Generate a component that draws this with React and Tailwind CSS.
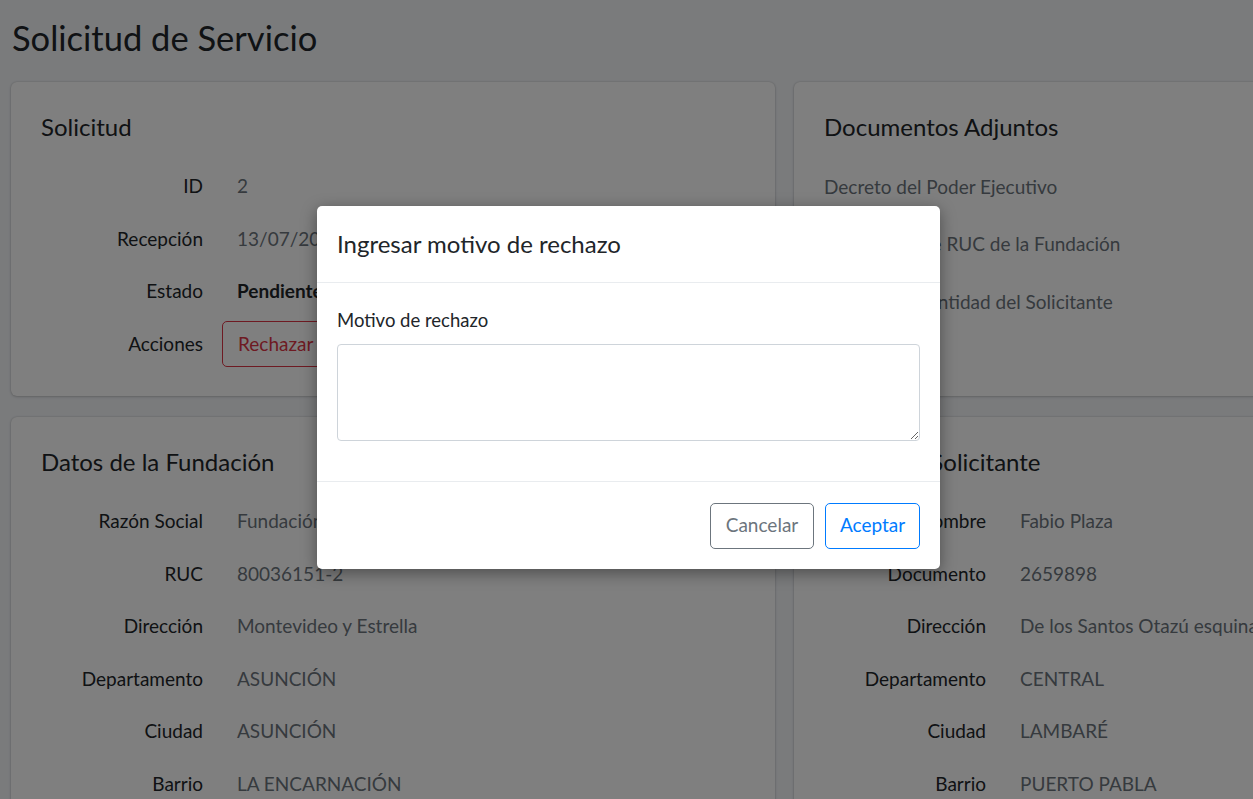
import React from "react";

const font = { fontFamily: "Lato, 'Open Sans', sans-serif" };

function Row({ label, children }) {
  return (
    <div className="flex h-[52.5px] items-center">
      <div className="w-[162px] shrink-0 text-right text-[19px] text-[#212529] whitespace-nowrap">{label}</div>
      <div className="ml-[19px] flex items-center text-[19px] text-[#6c757d]">{children}</div>
    </div>
  );
}

function Val({ children }) {
  return <span className="pl-[15px] whitespace-nowrap">{children}</span>;
}

function Card({ title, children, className = "" }) {
  return (
    <div className={"rounded-[6px] bg-white shadow-[0_0_2px_rgba(0,0,0,0.2),0_1px_3px_rgba(0,0,0,0.15)] px-[30px] pt-[30px] " + className}>
      <h3 className="text-[24px] leading-[30px] text-[#212529] whitespace-nowrap">{title}</h3>
      {children}
    </div>
  );
}

export default function App() {
  return (
    <div style={font} className="relative h-[799px] w-full overflow-hidden bg-[#f4f6f9]">
      <div className="px-[11px]">
        <h1 className="pt-[16px] pl-[1px] text-[34.5px] leading-[44px] text-[#212529]">Solicitud de Servicio</h1>
        <div className="mt-[22px] grid grid-cols-[764px_764px] gap-x-[19px] gap-y-[21px]">
          <Card title="Solicitud" className="pb-[26px]">
            <div className="mt-[18px]">
              <Row label="ID"><Val>2</Val></Row>
              <Row label="Recepción"><Val>13/07/2020</Val></Row>
              <Row label="Estado"><Val><b className="font-bold text-[#212529]">Pendiente</b></Val></Row>
              <Row label="Acciones">
                <button className="h-[46px] rounded-[5px] border border-[#dc3545] px-[15px] text-[19px] text-[#dc3545]">Rechazar</button>
                <button className="ml-[10px] h-[46px] rounded-[5px] border border-[#28a745] px-[15px] text-[19px] text-[#28a745]">Aprobar</button>
              </Row>
            </div>
          </Card>
          <Card title="Documentos Adjuntos">
            <div className="mt-[16px] flex flex-col text-[19px] text-[#6c757d]">
              <div className="flex h-[57.5px] items-center">Decreto del Poder Ejecutivo</div>
              <div className="flex h-[57.5px] items-center">Constancia de RUC de la Fundación</div>
              <div className="flex h-[57.5px] items-center">Cédula de Identidad del Solicitante</div>
            </div>
          </Card>
          <Card title="Datos de la Fundación">
            <div className="mt-[18px]">
              <Row label="Razón Social"><Val>Fundación Paraguaya</Val></Row>
              <Row label="RUC"><Val>80036151-2</Val></Row>
              <Row label="Dirección"><Val>Montevideo y Estrella</Val></Row>
              <Row label="Departamento"><Val>ASUNCIÓN</Val></Row>
              <Row label="Ciudad"><Val>ASUNCIÓN</Val></Row>
              <Row label="Barrio"><Val>LA ENCARNACIÓN</Val></Row>
            </div>
          </Card>
          <Card title="Datos del Solicitante">
            <div className="mt-[18px]">
              <Row label="Nombre"><Val>Fabio Plaza</Val></Row>
              <Row label="Documento"><Val>2659898</Val></Row>
              <Row label="Dirección"><Val>De los Santos Otazú esquina</Val></Row>
              <Row label="Departamento"><Val>CENTRAL</Val></Row>
              <Row label="Ciudad"><Val>LAMBARÉ</Val></Row>
              <Row label="Barrio"><Val>PUERTO PABLA</Val></Row>
            </div>
          </Card>
        </div>
      </div>

      <div className="absolute inset-0 bg-black/50" />

      <div className="absolute left-[317px] top-[206px] w-[623px] rounded-[5px] bg-white shadow-[0_4px_16px_rgba(0,0,0,0.4)]">
        <div className="flex h-[77px] items-center border-b border-[#e9ecef] px-[20px]">
          <h5 className="text-[24px] text-[#212529]">Ingresar motivo de rechazo</h5>
        </div>
        <div className="px-[20px] pt-[24px] pb-[40px]">
          <label className="block text-[18.5px] leading-[27px] text-[#212529]">Motivo de rechazo</label>
          <textarea className="mt-[10px] block h-[97px] w-full rounded-[4px] border border-[#ced4da] px-3 py-2 text-[18px] outline-none" />
        </div>
        <div className="flex h-[88px] items-center justify-end gap-[11px] border-t border-[#e9ecef] px-[20px]">
          <button className="h-[46px] w-[104px] rounded-[5px] border border-[#6c757d] text-[19px] text-[#6c757d]">Cancelar</button>
          <button className="h-[46px] w-[95px] rounded-[5px] border border-[#007bff] text-[19px] text-[#007bff]">Aceptar</button>
        </div>
      </div>
    </div>
  );
}
